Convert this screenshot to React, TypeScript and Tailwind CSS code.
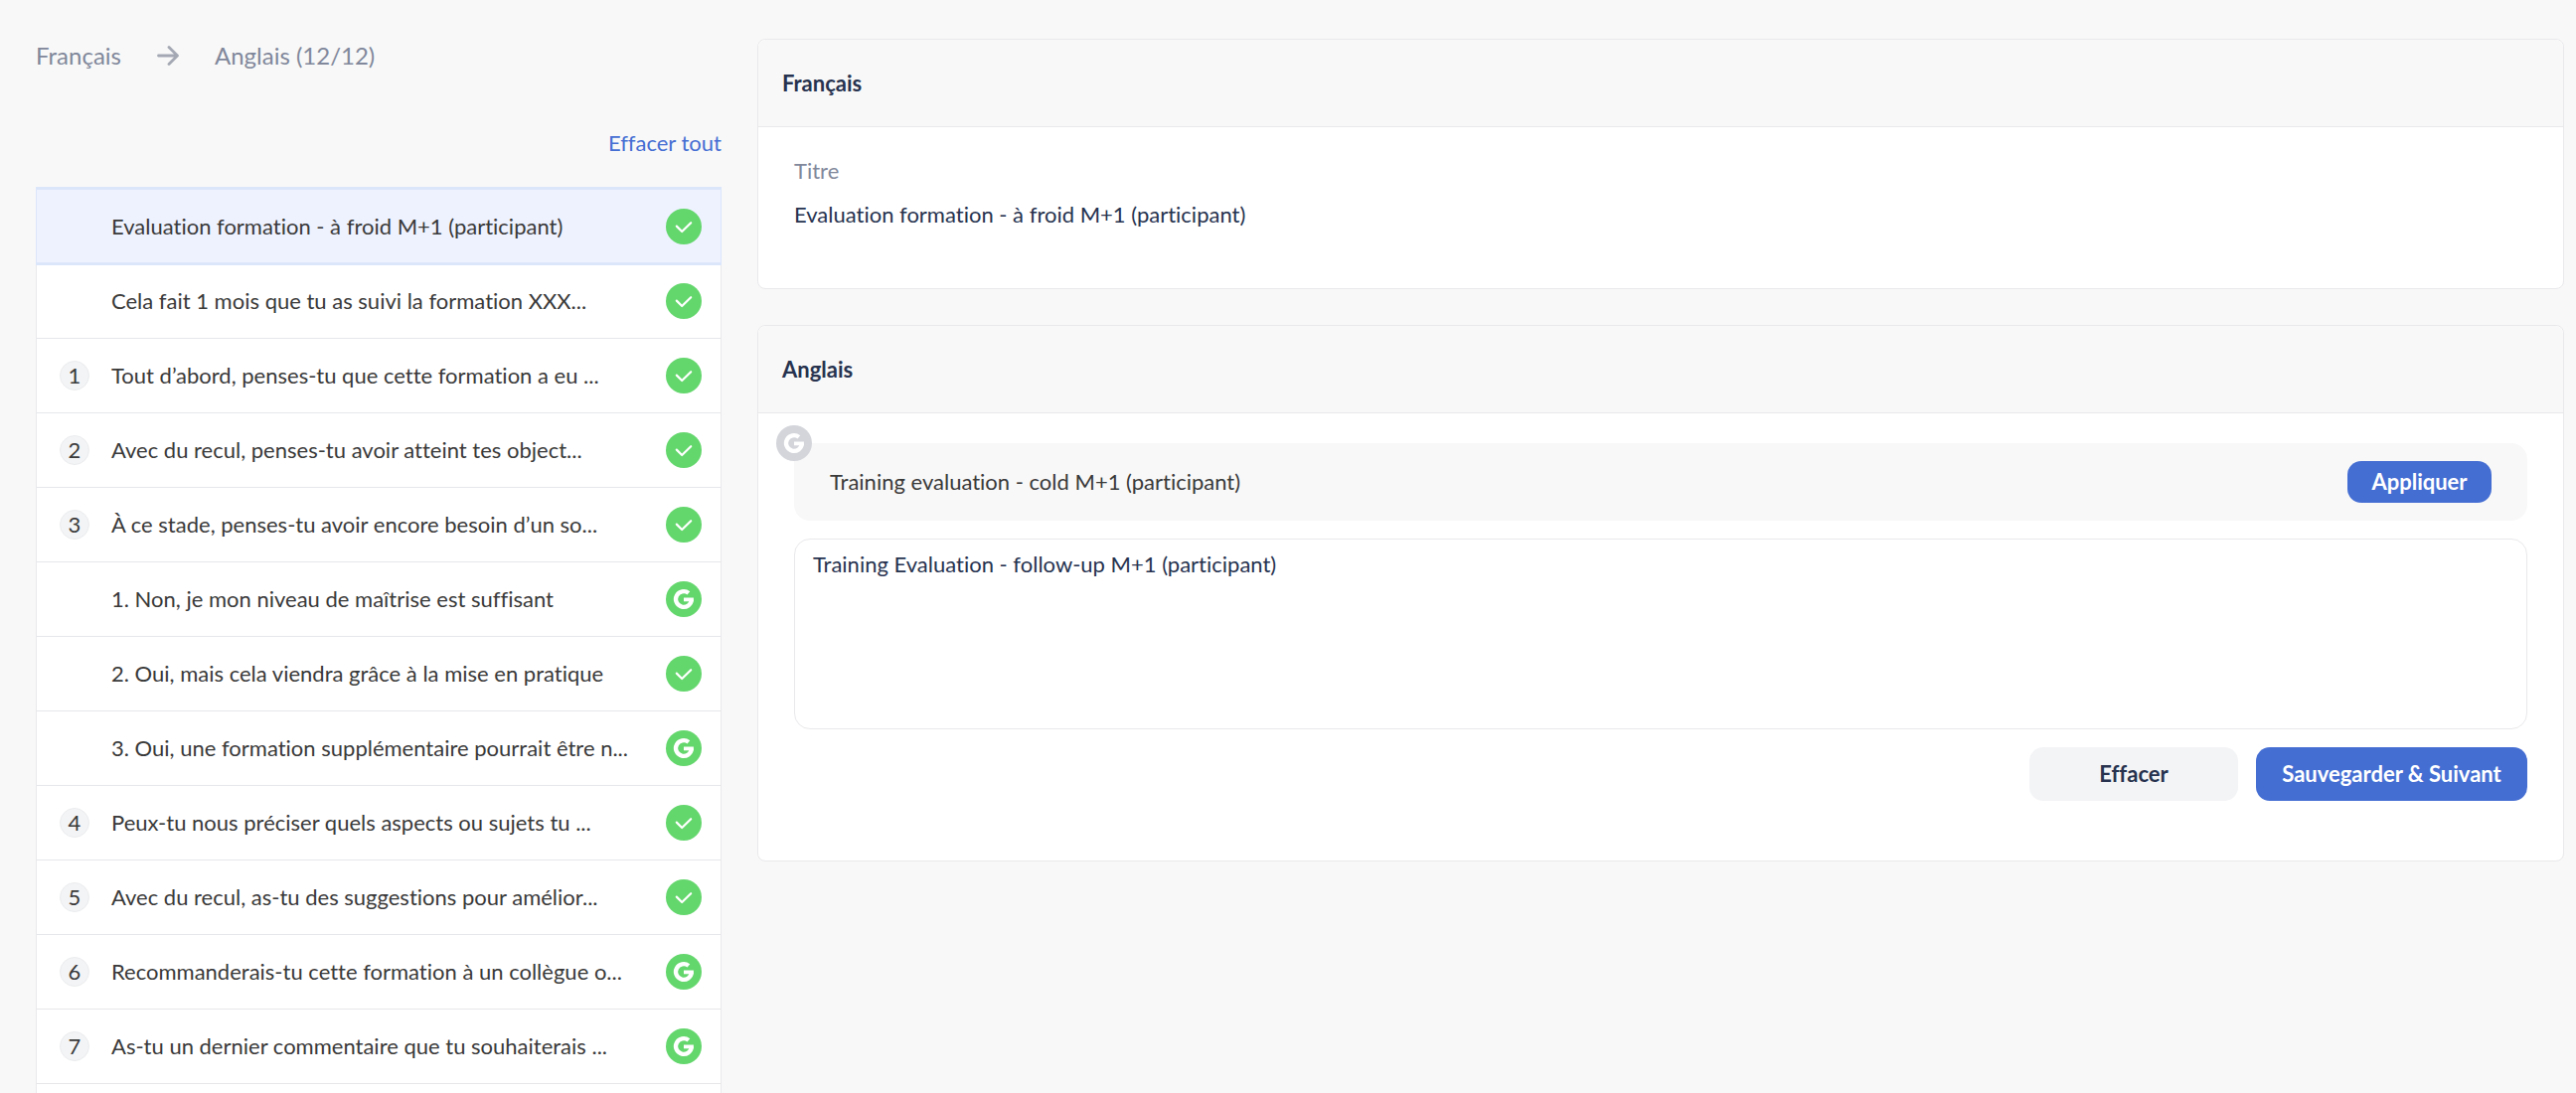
import { useState } from "react";

type Status = "done" | "google";

type Item = {
  number?: number;
  label: string;
  status: Status;
};

const items: Item[] = [
  { label: "Evaluation formation - à froid M+1 (participant)", status: "done" },
  { label: "Cela fait 1 mois que tu as suivi la formation XXX...", status: "done" },
  { number: 1, label: "Tout d’abord, penses-tu que cette formation a eu ...", status: "done" },
  { number: 2, label: "Avec du recul, penses-tu avoir atteint tes object...", status: "done" },
  { number: 3, label: "À ce stade, penses-tu avoir encore besoin d’un so...", status: "done" },
  { label: "1. Non, je mon niveau de maîtrise est suffisant", status: "google" },
  { label: "2. Oui, mais cela viendra grâce à la mise en pratique", status: "done" },
  { label: "3. Oui, une formation supplémentaire pourrait être n...", status: "google" },
  { number: 4, label: "Peux-tu nous préciser quels aspects ou sujets tu ...", status: "done" },
  { number: 5, label: "Avec du recul, as-tu des suggestions pour amélior...", status: "done" },
  { number: 6, label: "Recommanderais-tu cette formation à un collègue o...", status: "google" },
  { number: 7, label: "As-tu un dernier commentaire que tu souhaiterais ...", status: "google" },
];

function CheckBadge() {
  return (
    <svg viewBox="0 0 36 36" className="size-9 shrink-0" fill="none" aria-hidden="true">
      <circle cx="18" cy="18" r="18" fill="#63d66c" />
      <path
        d="M10.8 17.6l5.4 5.4 9-8.8"
        stroke="#fff"
        strokeWidth="2.2"
        strokeLinecap="round"
        strokeLinejoin="round"
      />
    </svg>
  );
}

function GoogleBadge({ color }: { color: string }) {
  return (
    <svg viewBox="0 0 36 36" className="size-9 shrink-0" fill="none" stroke="#fff" aria-hidden="true">
      <circle cx="18" cy="18" r="18" fill={color} stroke="none" />
      <path d="M22.9 11.9A7.9 7.9 0 1 0 25.8 18.4" strokeWidth="4.3" />
      <path d="M18 18.4H27.9" strokeWidth="3.8" />
    </svg>
  );
}

export default function App() {
  const [selected, setSelected] = useState(0);
  const [translation, setTranslation] = useState(
    "Training Evaluation - follow-up M+1 (participant)"
  );

  return (
    <div className="flex h-screen gap-9 overflow-hidden bg-[#f8f8f8] pl-9 pr-3 font-['Lato',sans-serif] text-[22px] leading-8 text-[#3a3a3a] [font-variant-ligatures:none]">
      <aside className="flex w-[690px] shrink-0 flex-col pt-10">
        <div className="flex items-center gap-9 text-[24px] text-[#81889b]">
          <span>Français</span>
          <svg viewBox="0 0 22 22" className="size-[22px]" fill="none" aria-hidden="true">
            <path
              d="M1.5 11H20M12 2.5l8.5 8.5-8.5 8.5"
              stroke="#a3a8b3"
              strokeWidth="2.8"
              strokeLinecap="round"
              strokeLinejoin="round"
            />
          </svg>
          <span>Anglais (12/12)</span>
        </div>

        <div className="mt-14 flex justify-end">
          <button type="button" className="text-[#456ed3]">
            Effacer tout
          </button>
        </div>

        {/* Liste des textes à traduire */}
        <ul className="mt-7 grow border-x border-t border-[#e9e9ec] bg-white">
          {items.map((item, index) => (
            <li key={item.label} className="h-[75px] first:h-[77px]">
              <button
                type="button"
                onClick={() => setSelected(index)}
                className={
                  index === selected
                    ? "flex h-full w-full items-center border-y-2 border-[#dce6fb] bg-[#eef2ff] pl-[23px] pr-[19px] text-left outline-1 outline-[#dce6fb]"
                    : "flex h-full w-full items-center border-b border-[#e6e7ea] pl-[23px] pr-[19px] text-left"
                }
              >
                <span className="w-[52px] shrink-0">
                  {item.number && (
                    <span className="flex size-[30px] items-center justify-center rounded-full border border-[#ebecee] bg-[#f3f4f6]">
                      {item.number}
                    </span>
                  )}
                </span>
                <span className="grow whitespace-nowrap">{item.label}</span>
                {item.status === "done" ? <CheckBadge /> : <GoogleBadge color="#63d66c" />}
              </button>
            </li>
          ))}
        </ul>
      </aside>

      <main className="flex min-w-0 grow flex-col gap-9 pt-[39px]">
        <section className="rounded-lg border border-[#e9e9ec] bg-white">
          <h2 className="rounded-t-lg border-b border-[#e9e9ec] bg-[#f8f8f8] px-6 pb-[27px] pt-7 font-bold text-[#27334f]">
            Français
          </h2>
          <div className="px-9 pb-[58px] pt-7">
            <p className="text-[#81889b]">Titre</p>
            <p className="mt-3 text-[#27334f]">Evaluation formation - à froid M+1 (participant)</p>
          </div>
        </section>

        <section className="rounded-lg border border-[#e9e9ec] bg-white">
          <h2 className="rounded-t-lg border-b border-[#e9e9ec] bg-[#f8f8f8] px-6 pb-[27px] pt-7 font-bold text-[#27334f]">
            <label htmlFor="translation">Anglais</label>
          </h2>
          <div className="px-9 pb-[60px] pt-[30px]">
            {/* Suggestion automatique */}
            <div className="relative flex items-center justify-between rounded-2xl bg-[#f8f8f8] px-9 py-[18px]">
              <span className="absolute -left-[18px] -top-[18px]">
                <GoogleBadge color="#d3d5db" />
              </span>
              <p>Training evaluation - cold M+1 (participant)</p>
              <button
                type="button"
                onClick={() => setTranslation("Training evaluation - cold M+1 (participant)")}
                className="h-[42px] w-[145px] rounded-[14px] bg-[#456ed3] font-bold text-white"
              >
                Appliquer
              </button>
            </div>

            <textarea
              id="translation"
              value={translation}
              onChange={(e) => setTranslation(e.target.value)}
              className="mt-[18px] block h-48 w-full resize-none rounded-2xl border border-[#e9e9ec] bg-white px-[18px] py-[9px] text-[#27334f] outline-none"
            />

            <div className="mt-[18px] flex justify-end gap-[18px]">
              <button
                type="button"
                onClick={() => setTranslation("")}
                className="h-[54px] w-[210px] rounded-[14px] bg-[#f3f4f6] font-bold text-[#27334f]"
              >
                Effacer
              </button>
              <button
                type="button"
                className="h-[54px] w-[273px] whitespace-nowrap rounded-[14px] bg-[#456ed3] font-bold text-white"
              >
                Sauvegarder &amp; Suivant
              </button>
            </div>
          </div>
        </section>
      </main>
    </div>
  );
}
